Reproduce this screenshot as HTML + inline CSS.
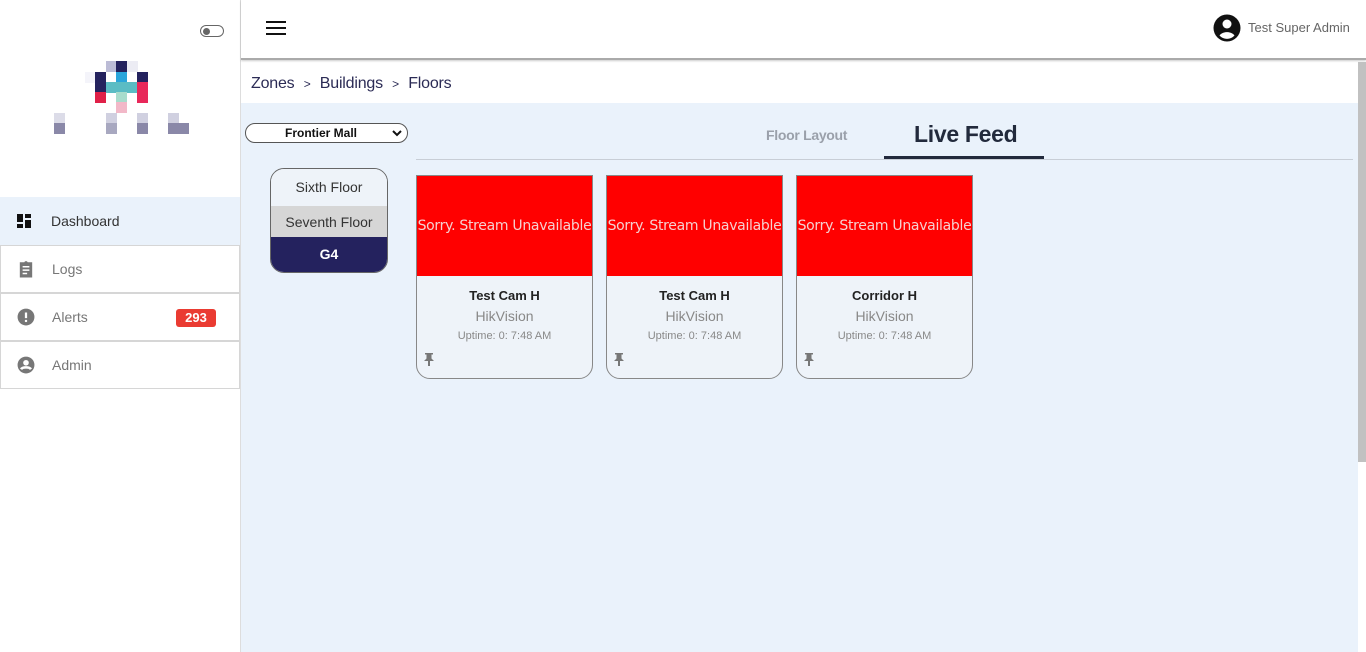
<!DOCTYPE html>
<html><head><meta charset="utf-8"><style>
*{box-sizing:border-box;margin:0;padding:0}
body{width:1366px;height:652px;overflow:hidden;font-family:"Liberation Sans",Arial,sans-serif;background:#fff;position:relative}
.abs{position:absolute}
.side{left:0;top:0;width:241px;height:652px;background:#fff;border-right:1px solid #ddd}
.px{position:absolute;width:11px;height:11px}
.nav{position:absolute;left:0;width:240px;height:48px;border:1px solid #d6d6d6;border-top:none;font-size:14px;color:#777;display:flex;align-items:center}
.nav span{position:absolute;left:51px}
.nav svg{position:absolute;left:16px}
.main{left:241px;top:103px;width:1117px;height:549px;background:#eaf2fb}
.card{position:absolute;top:175px;width:177px;height:204px;border:1px solid #888;border-radius:0 0 14px 14px;background:#eef3f9;overflow:hidden}
.card .red{height:100px;background:#f00;color:#f5d0d0;font-family:"DejaVu Sans",sans-serif;font-size:14px;display:flex;align-items:center;justify-content:center;white-space:nowrap;letter-spacing:-.3px}
.card .t{text-align:center;font-weight:bold;font-size:13px;color:#222;margin-top:12px}
.card .v{text-align:center;font-size:14px;color:#888;margin-top:5px}
.card .u{text-align:center;font-size:11px;color:#888;margin-top:6px}
.card svg{position:absolute;left:6px;top:176px}
</style></head><body>
<div class="abs side">
 <div class="abs" style="left:200px;top:25px;width:24px;height:12px;border:1px solid #666;border-radius:6px"><div style="position:absolute;left:2px;top:1.5px;width:7px;height:7px;border-radius:50%;background:#666"></div></div>
 <div class="px" style="left:106px;top:61px;background:#bcbcd6"></div>
 <div class="px" style="left:116px;top:61px;background:#24225e"></div>
 <div class="px" style="left:127px;top:61px;background:#ececf4"></div>
 <div class="px" style="left:85px;top:72px;background:#f4f4fa"></div>
 <div class="px" style="left:95px;top:72px;height:21px;background:#24225e"></div>
 <div class="px" style="left:116px;top:72px;background:#2aa5db"></div>
 <div class="px" style="left:137px;top:72px;background:#24225e"></div>
 <div class="px" style="left:106px;top:82px;width:31px;background:#5bbcc4"></div>
 <div class="px" style="left:137px;top:82px;height:21px;background:#e8285a"></div>
 <div class="px" style="left:95px;top:92px;background:#e02048"></div>
 <div class="px" style="left:116px;top:92px;background:#a8dccc"></div>
 <div class="px" style="left:116px;top:102px;background:#f2b8c8"></div>
 <div class="px" style="left:54px;top:113px;background:#dcdce8"></div>
 <div class="px" style="left:106px;top:113px;background:#d0d0e0"></div>
 <div class="px" style="left:137px;top:113px;background:#d0d0e0"></div>
 <div class="px" style="left:168px;top:113px;background:#d0d0e0"></div>
 <div class="px" style="left:54px;top:123px;background:#8a88a8"></div>
 <div class="px" style="left:106px;top:123px;background:#a8a8c0"></div>
 <div class="px" style="left:137px;top:123px;background:#8a88a8"></div>
 <div class="px" style="left:168px;top:123px;width:21px;background:#8a88a8"></div>
 <div class="nav" style="top:197px;border:none;background:#eaf2fb;color:#333"><svg width="16" height="16" viewBox="0 0 16 16"><path d="M1 1h6v8H1zM9 1h6v4H9zM9 7h6v8H9zM1 11h6v4H1z" fill="#111"/></svg><span>Dashboard</span></div>
 <div class="nav" style="top:245px;border-top:1px solid #d6d6d6"><svg width="18" height="18" viewBox="0 0 16 16"><path d="M2.5 2h4a1.6 1.6 0 0 1 3 0h4v13.5h-11z" fill="#777"/><path d="M5 6h6M5 9h6M5 12h4" stroke="#fff" stroke-width="1.3"/></svg><span>Logs</span></div>
 <div class="nav" style="top:293px;border-top:1px solid #d6d6d6"><svg width="18" height="18" viewBox="0 0 16 16"><circle cx="8" cy="8" r="7.5" fill="#777"/><path d="M8 4v5" stroke="#fff" stroke-width="2"/><circle cx="8" cy="11.5" r="1.1" fill="#fff"/></svg><span>Alerts</span><div style="position:absolute;left:175px;top:15px;width:40px;height:18px;background:#ea3b32;border-radius:3px;color:#fff;font-weight:bold;font-size:13px;text-align:center;line-height:18px">293</div></div>
 <div class="nav" style="top:341px;border-top:1px solid #d6d6d6"><svg width="18" height="18" viewBox="0 0 16 16"><circle cx="8" cy="8" r="7.5" fill="#777"/><circle cx="8" cy="6" r="2.5" fill="#fff"/><path d="M3.6 11.8c1.3-2.2 7.5-2.2 8.8 0" stroke="#fff" stroke-width="2.2" fill="none"/></svg><span>Admin</span></div>
</div>
<div class="abs" style="left:241px;top:0;width:1125px;height:60px;background:#fff;border-bottom:2px solid #aaa;box-shadow:0 1px 2px rgba(0,0,0,.2)"></div>
<svg class="abs" style="left:266px;top:20px" width="20" height="16"><path d="M0 2h20M0 8h20M0 14h20" stroke="#111" stroke-width="2"/></svg>
<svg class="abs" style="left:1213px;top:14px" width="28" height="28" viewBox="0 0 28 28"><circle cx="14" cy="14" r="13.5" fill="#111"/><circle cx="14" cy="10" r="4.5" fill="#fff"/><path d="M6.5 21.5c3-4.5 12-4.5 15 0a10 10 0 0 1-15 0z" fill="#fff"/></svg>
<div class="abs" style="left:1248px;top:20px;font-size:13px;color:#666">Test Super Admin</div>
<div class="abs" style="left:1358px;top:62px;width:8px;height:400px;background:#c1c1c1"></div>
<div class="abs" style="left:251px;top:75px;font-size:16px;color:#2b2b55;letter-spacing:-.2px">Zones <span style="font-size:12px;margin:0 5px">&gt;</span> Buildings <span style="font-size:12px;margin:0 5px">&gt;</span> Floors</div>
<div class="abs main"></div>
<div class="abs" style="left:245px;top:123px;width:163px;height:20px;border:1px solid #555;border-radius:10px;background:#fff;font-size:12px;font-weight:bold;color:#111;line-height:18px;padding-left:39px">Frontier Mall<svg style="position:absolute;right:5px;top:5px" width="10" height="8"><path d="M1 2l4 4 4-4" stroke="#111" stroke-width="2" fill="none"/></svg></div>
<div class="abs" style="left:766px;top:127px;font-size:14px;font-weight:bold;color:#9aa0aa;letter-spacing:-.3px">Floor Layout</div>
<div class="abs" style="left:914px;top:121px;font-size:23px;font-weight:bold;color:#222a3c;letter-spacing:-.3px">Live Feed</div>
<div class="abs" style="left:416px;top:159px;width:937px;height:1px;background:#c8ced6"></div>
<div class="abs" style="left:884px;top:156px;width:160px;height:3px;background:#222a3c"></div>
<div class="abs" style="left:270px;top:168px;width:118px;height:105px;border:1px solid #666;border-radius:14px;overflow:hidden;font-size:14px;color:#333;text-align:center">
 <div style="height:37px;background:#eef3f9;line-height:37px">Sixth Floor</div>
 <div style="height:31px;background:#d6d6d6;line-height:33px">Seventh Floor</div>
 <div style="height:37px;background:#24225e;color:#fff;font-weight:bold;line-height:34px">G4</div>
</div>
<div class="card" style="left:416px"><div class="red">Sorry. Stream Unavailable</div><div class="t">Test Cam H</div><div class="v">HikVision</div><div class="u">Uptime: 0: 7:48 AM</div><svg width="12" height="14" viewBox="0 0 12 14"><path d="M2 1h8v1.5H8.5v4L11 9H7v5H5V9H1l2.5-2.5v-4H2z" fill="#777"/></svg></div>
<div class="card" style="left:606px"><div class="red">Sorry. Stream Unavailable</div><div class="t">Test Cam H</div><div class="v">HikVision</div><div class="u">Uptime: 0: 7:48 AM</div><svg width="12" height="14" viewBox="0 0 12 14"><path d="M2 1h8v1.5H8.5v4L11 9H7v5H5V9H1l2.5-2.5v-4H2z" fill="#777"/></svg></div>
<div class="card" style="left:796px"><div class="red">Sorry. Stream Unavailable</div><div class="t">Corridor H</div><div class="v">HikVision</div><div class="u">Uptime: 0: 7:48 AM</div><svg width="12" height="14" viewBox="0 0 12 14"><path d="M2 1h8v1.5H8.5v4L11 9H7v5H5V9H1l2.5-2.5v-4H2z" fill="#777"/></svg></div>
</body></html>
